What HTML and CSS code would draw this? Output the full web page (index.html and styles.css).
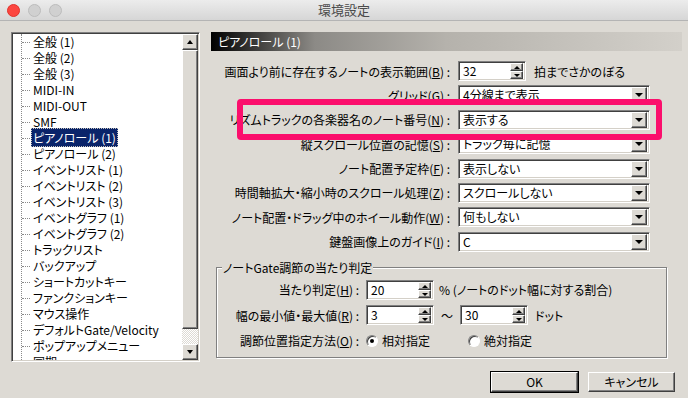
FILE: index.html
```html
<!DOCTYPE html>
<html lang="ja">
<head>
    <meta charset="UTF-8">
    <title>環境設定</title>
    <link rel="stylesheet" href="styles.css">
</head>
<body>
<div class="window">
    <div class="titlebar">
        <div class="lights">
            <span class="light close"></span>
            <span class="light"></span>
            <span class="light"></span>
        </div>
        <div class="title">環境設定</div>
    </div>

    <div class="main">
        <div class="tree">
            <ul class="tree-items">
                <li><span>全般 (1)</span></li>
                <li><span>全般 (2)</span></li>
                <li><span>全般 (3)</span></li>
                <li><span>MIDI-IN</span></li>
                <li><span>MIDI-OUT</span></li>
                <li><span>SMF</span></li>
                <li><span class="selected">ピアノロール (1)</span></li>
                <li><span>ピアノロール (2)</span></li>
                <li><span>イベントリスト (1)</span></li>
                <li><span>イベントリスト (2)</span></li>
                <li><span>イベントリスト (3)</span></li>
                <li><span>イベントグラフ (1)</span></li>
                <li><span>イベントグラフ (2)</span></li>
                <li><span>トラックリスト</span></li>
                <li><span>バックアップ</span></li>
                <li><span>ショートカットキー</span></li>
                <li><span>ファンクションキー</span></li>
                <li><span>マウス操作</span></li>
                <li><span>デフォルトGate/Velocity</span></li>
                <li><span>ポップアップメニュー</span></li>
                <li><span>同期</span></li>
            </ul>
            <div class="vscroll">
                <div class="sb-btn up"></div>
                <div class="sb-thumb"></div>
                <div class="sb-track"></div>
                <div class="sb-btn down"></div>
            </div>
        </div>

        <div class="panel">
            <div class="panel-head">ピアノロール (1)</div>

            <div class="form">
                <div class="row">
                    <span class="label">画面より前に存在するノートの表示範囲(<u>B</u>) :</span>
                    <div class="field spin"><span class="val">32</span><span class="spin-btns"><i class="up"></i><i class="down"></i></span></div>
                    <span class="note">拍までさかのぼる</span>
                </div>
                <div class="row">
                    <span class="label">グリッド(<u>G</u>) :</span>
                    <div class="field combo"><span class="val">4分線まで表示</span><span class="combo-btn"></span></div>
                </div>
                <div class="row">
                    <span class="label">リズムトラックの各楽器名のノート番号(<u>N</u>) :</span>
                    <div class="field combo"><span class="val">表示する</span><span class="combo-btn"></span></div>
                </div>
                <div class="row">
                    <span class="label">縦スクロール位置の記憶(<u>S</u>) :</span>
                    <div class="field combo"><span class="val">トラック毎に記憶</span><span class="combo-btn"></span></div>
                </div>
                <div class="row">
                    <span class="label">ノート配置予定枠(<u>F</u>) :</span>
                    <div class="field combo"><span class="val">表示しない</span><span class="combo-btn"></span></div>
                </div>
                <div class="row">
                    <span class="label">時間軸拡大・縮小時のスクロール処理(<u>Z</u>) :</span>
                    <div class="field combo"><span class="val">スクロールしない</span><span class="combo-btn"></span></div>
                </div>
                <div class="row">
                    <span class="label">ノート配置・ドラッグ中のホイール動作(<u>W</u>) :</span>
                    <div class="field combo"><span class="val">何もしない</span><span class="combo-btn"></span></div>
                </div>
                <div class="row">
                    <span class="label">鍵盤画像上のガイド(<u>I</u>) :</span>
                    <div class="field combo"><span class="val">C</span><span class="combo-btn"></span></div>
                </div>
            </div>

            <fieldset class="group">
                <legend>ノートGate調節の当たり判定</legend>
                <div class="row">
                    <span class="label">当たり判定(<u>H</u>) :</span>
                    <div class="field spin"><span class="val">20</span><span class="spin-btns"><i class="up"></i><i class="down"></i></span></div>
                    <span class="note pct">% (ノートのドット幅に対する割合)</span>
                </div>
                <div class="row">
                    <span class="label">幅の最小値・最大値(<u>R</u>) :</span>
                    <div class="field spin"><span class="val">3</span><span class="spin-btns"><i class="up"></i><i class="down"></i></span></div>
                    <span class="note">〜</span>
                    <div class="field spin"><span class="val">30</span><span class="spin-btns"><i class="up"></i><i class="down"></i></span></div>
                    <span class="note">ドット</span>
                </div>
                <div class="row">
                    <span class="label">調節位置指定方法(<u>O</u>) :</span>
                    <span class="opt"><span class="radio checked"></span>相対指定</span>
                    <span class="opt"><span class="radio"></span>絶対指定</span>
                </div>
            </fieldset>

            <div class="buttons">
                <button class="btn default">OK</button>
                <button class="btn">キャンセル</button>
            </div>
        </div>
    </div>

    <div class="highlight"></div>
</div>
</body>
</html>
```

FILE: styles.css
```css
body {
    margin: 0;
    background-color: #dddad4;
    color: #000;
    font-family: "Noto Sans CJK JP", "Noto Sans", sans-serif;
    font-size: 12px;
    font-feature-settings: "palt";
}

.window {
    position: relative;
    width: 688px;
    height: 398px;
    overflow: hidden;
}

/* title bar */
.titlebar {
    height: 20px;
    border-bottom: 1px solid #b4b4b4;
    background: linear-gradient(#ececec, #d6d6d6);
    display: flex;
    align-items: center;
    position: relative;
}

.lights {
    display: flex;
    gap: 8px;
    padding-left: 7px;
}

.light {
    width: 11px;
    height: 11px;
    border-radius: 50%;
    background-color: #d0d0d0;
    border: 1px solid #bcbcbc;
}

.light.close {
    background-color: #fc4640;
    border-color: #e0332d;
}

.title {
    position: absolute;
    left: 0;
    right: 0;
    text-align: center;
    font-size: 13px;
    color: #4a4a4a;
    line-height: 20px;
}

.main {
    display: flex;
    gap: 11px;
    padding: 11px 0 0 11px;
}

/* sunken / raised borders */
.tree, .field {
    background-color: #fff;
    border: 1px solid;
    border-color: #808080 #fff #fff #808080;
    box-shadow: inset 1px 1px 0 #404040, inset -1px -1px 0 #d4d0c8;
    box-sizing: border-box;
}

.sb-btn, .sb-thumb, .combo-btn, .spin-btns i, .btn {
    background-color: #dddad4;
    border: 1px solid;
    border-color: #fff #404040 #404040 #fff;
    box-shadow: inset -1px -1px 0 #808080;
    box-sizing: border-box;
}

/* tree */
.tree {
    width: 189px;
    height: 330px;
    padding: 1px;
    display: flex;
    overflow: hidden;
}

.tree-items {
    list-style: none;
    flex: 1;
    margin: 0 0 0 8px;
    padding: 0;
    border-left: 1px dotted #8a8a8a;
    overflow: hidden;
}

.tree-items li {
    position: relative;
    height: 16px;
    line-height: 16px;
    padding-left: 9px;
    white-space: nowrap;
}

.tree-items li::before {
    content: "";
    position: absolute;
    left: 0;
    top: 8px;
    width: 8px;
    border-top: 1px dotted #8a8a8a;
}

.tree-items li span {
    padding: 0 2px;
}

.tree-items li .selected {
    background-color: #0a246a;
    color: #fff;
    outline: 1px dotted #c8c4bc;
    outline-offset: -1px;
    padding: 1px 2px;
}

.vscroll {
    width: 16px;
    display: flex;
    flex-direction: column;
}

.sb-btn {
    height: 16px;
    position: relative;
}

.sb-btn::after {
    content: "";
    position: absolute;
    left: 4px;
    top: 5px;
    border-left: 3px solid transparent;
    border-right: 3px solid transparent;
}

.sb-btn.up::after {
    border-bottom: 4px solid #000;
}

.sb-btn.down::after {
    border-top: 4px solid #000;
}

.sb-thumb {
    height: 279px;
}

.sb-track {
    flex: 1;
    background: repeating-conic-gradient(#fff 0 25%, #dddad4 0 50%) 0 0 / 2px 2px;
}

/* right panel */
.panel {
    width: 471px;
}

.panel-head {
    height: 19px;
    line-height: 19px;
    padding-left: 7px;
    color: #fff;
    background: linear-gradient(to right, #000 0%, #8c8a86 22%, #b5b2ac 50%, #d3d0ca 100%);
}

.form {
    display: flex;
    flex-direction: column;
    gap: 4.4px;
    margin-top: 10px;
}

.row {
    display: flex;
    align-items: center;
    height: 20px;
    gap: 8px;
    white-space: nowrap;
}

.label {
    width: 239px;
    text-align: right;
}

.field {
    height: 20px;
    display: flex;
    align-items: center;
    padding: 2px;
}

.field .val {
    flex: 1;
    padding-left: 2px;
    line-height: 16px;
    overflow: hidden;
}

.combo {
    width: 192px;
}

.combo-btn {
    width: 16px;
    height: 16px;
    position: relative;
}

.combo-btn::after {
    content: "";
    position: absolute;
    left: 3px;
    top: 5px;
    border-left: 4px solid transparent;
    border-right: 4px solid transparent;
    border-top: 4px solid #000;
}

.spin {
    width: 68px;
}

.spin-btns {
    width: 13px;
    height: 16px;
    display: flex;
    flex-direction: column;
}

.spin-btns i {
    flex: 1;
    position: relative;
}

.spin-btns i::after {
    content: "";
    position: absolute;
    left: 3px;
    top: 2px;
    border-left: 3px solid transparent;
    border-right: 3px solid transparent;
}

.spin-btns .up::after {
    border-bottom: 3px solid #000;
}

.spin-btns .down::after {
    border-top: 3px solid #000;
}

/* group box */
.group {
    margin: 9px 0 0 5px;
    width: 451px;
    box-sizing: border-box;
    padding: 5px 0 6px 0;
    border: 1px solid #808080;
    box-shadow: 1px 1px 0 #fff, inset 1px 1px 0 #fff;
    display: flex;
    flex-direction: column;
    gap: 5.5px;
}

.group legend {
    margin-left: 5px;
    padding: 0 1px;
    line-height: 14px;
    background-color: #dddad4;
}

.group .row {
    gap: 7px;
}

.group .label {
    width: 142px;
}

.group .pct {
    margin-left: -2px;
}

.opt {
    display: flex;
    align-items: center;
    gap: 4px;
    width: 95px;
}

.radio {
    width: 12px;
    height: 12px;
    border-radius: 50%;
    background-color: #fff;
    border: 1px solid;
    border-color: #808080 #fff #fff #808080;
    box-shadow: inset 1px 1px 0 #404040;
    box-sizing: border-box;
    position: relative;
}

.radio.checked::after {
    content: "";
    position: absolute;
    left: 3px;
    top: 3px;
    width: 4px;
    height: 4px;
    border-radius: 50%;
    background-color: #000;
}

/* buttons */
.buttons {
    display: flex;
    justify-content: flex-end;
    gap: 10px;
    padding-right: 7px;
    margin-top: 14px;
}

.btn {
    width: 87px;
    height: 20px;
    font-family: inherit;
    font-size: 12px;
    font-feature-settings: "palt";
    color: #000;
    padding: 0;
}

.btn.default {
    outline: 1px solid #000;
    outline-offset: 0;
}

/* annotation */
.highlight {
    position: absolute;
    left: 237px;
    top: 99px;
    width: 425px;
    height: 41px;
    box-sizing: border-box;
    border: 6px solid #fb0e6c;
    border-radius: 4px;
}
```
